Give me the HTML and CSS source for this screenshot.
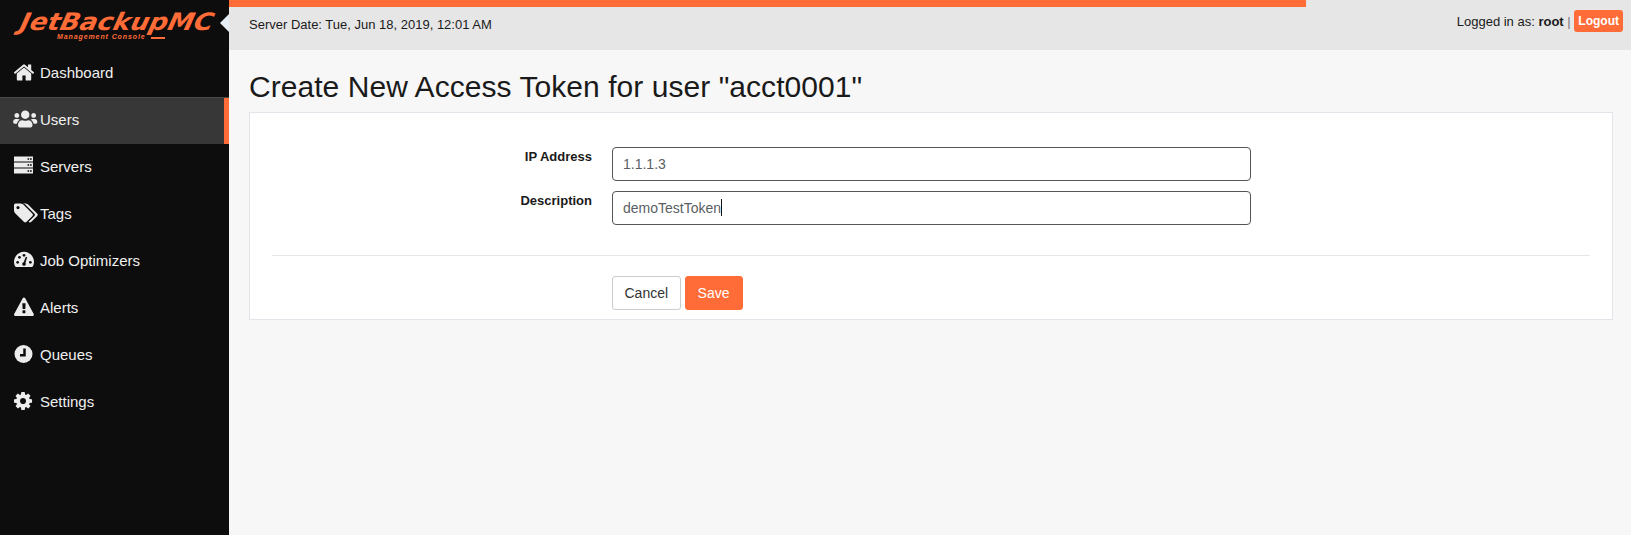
FILE: index.html
```html
<!DOCTYPE html>
<html lang="en">
<head>
    <meta charset="UTF-8">
    <title>JetBackupMC - Create New Access Token</title>
    <link rel="stylesheet" href="styles.css">
</head>
<body>
    <aside class="sidebar">
        <div class="logo">
            <div class="logo-name">JetBackupMC</div>
            <div class="logo-sub">Management Console</div>
            <span class="sidebar-toggle"></span>
        </div>
        <nav class="menu">
            <a href="#dashboard" class="menu-item">
                <svg class="menu-icon" viewBox="95 66 1920 1600" preserveAspectRatio="xMinYMid meet"><path d="M1472 992v480q0 26-19 45t-45 19h-384v-384h-256v384h-384q-26 0-45-19t-19-45v-480q0-1 .5-3t.5-3l575-474 575 474q1 2 1 6zm223-69l-62 74q-8 9-21 11h-3q-13 0-21-7l-692-577-692 577q-12 8-24 7-13-2-21-11l-62-74q-8-10-7-23.5t11-21.5l719-599q32-26 76-26t76 26l244 204v-195q0-14 9-23t23-9h192q14 0 23 9t9 23v408l219 182q10 8 11 21.5t-7 23.5z"/></svg>
                Dashboard
            </a>
            <a href="#users" class="menu-item active">
                <svg class="menu-icon" viewBox="20 -10 640 533" preserveAspectRatio="xMinYMid meet"><path d="M96 224c35.300 0 64-28.700 64-64s-28.700-64-64-64-64 28.700-64 64 28.700 64 64 64zm448 0c35.300 0 64-28.700 64-64s-28.700-64-64-64-64 28.700-64 64 28.700 64 64 64zm32 32h-64c-17.600 0-33.500 7.100-45.100 18.600 40.300 22.100 68.900 62 75.100 109.400h66c17.700 0 32-14.300 32-32v-32c0-35.300-28.700-64-64-64zm-256 0c61.900 0 112-50.100 112-112S381.900 32 320 32 208 82.100 208 144s50.100 112 112 112zm76.800 32h-8.300c-20.800 10-43.900 16-68.500 16s-47.600-6-68.500-16h-8.300C179.600 288 128 339.600 128 403.200V432c0 26.500 21.500 48 48 48h288c26.500 0 48-21.500 48-48v-28.800c0-63.600-51.600-115.200-115.200-115.200zm-223.700-13.400C161.500 263.100 145.600 256 128 256H64c-35.300 0-64 28.700-64 64v32c0 17.700 14.300 32 32 32h65.900c6.300-47.400 34.900-87.300 75.200-109.400z"/></svg>
                Users
            </a>
            <a href="#servers" class="menu-item">
                <svg class="menu-icon" viewBox="1 1 24 20" preserveAspectRatio="xMinYMid meet"><path fill-rule="evenodd" d="M1 1.500h19v5H1zM14.500 3.300h1.700v1.500h-1.700zM17 3.300h1.700v1.500H17zM1 7.500h19v5H1zM14.500 9.300h1.700v1.500h-1.700zM17 9.300h1.700v1.500H17zM1 13.500h19v5H1zM14.500 15.300h1.700v1.500h-1.700zM17 15.300h1.700v1.500H17z"/></svg>
                Servers
            </a>
            <a href="#tags" class="menu-item">
                <svg class="menu-icon" viewBox="0 80 1920 1600" preserveAspectRatio="xMinYMid meet"><path d="M448 448q0-53-37.5-90.5t-90.5-37.5-90.5 37.5-37.5 90.5 37.5 90.5 90.5 37.5 90.5-37.5 37.5-90.5zm1067 576q0 53-37 90l-491 492q-39 37-91 37-53 0-90-37l-715-716q-38-37-64.5-101t-26.5-117v-416q0-52 38-90t90-38h416q53 0 117 26.5t102 64.5l715 714q37 39 37 91zm384 0q0 53-37 90l-491 492q-39 37-91 37-36 0-59-14t-53-45l470-470q37-37 37-90 0-52-37-91l-715-714q-38-38-102-64.5t-117-26.5h224q53 0 117 26.5t102 64.5l715 714q37 39 37 91z"/></svg>
                Tags
            </a>
            <a href="#optimizers" class="menu-item">
                <svg class="menu-icon" viewBox="0 0 26.400 22" preserveAspectRatio="xMinYMid meet">
                    <path d="M11 2C5 2 0 6.900 0 13c0 2 .5 3.700 1.400 5.200.2.300.5.500.9.500h17.400c.4 0 .7-.2.900-.5.900-1.500 1.400-3.200 1.400-5.200C22 6.900 17 2 11 2z"/>
                    <g class="gauge-marks">
                        <circle cx="4" cy="13.500" r="1.500"/>
                        <circle cx="6" cy="8" r="1.500"/>
                        <circle cx="11" cy="5.800" r="1.500"/>
                        <circle cx="18" cy="13.500" r="1.500"/>
                        <circle cx="11" cy="15.500" r="2"/>
                        <path d="M10 15l3-7.500 1.500.5-2.500 8z"/>
                    </g>
                </svg>
                Job Optimizers
            </a>
            <a href="#alerts" class="menu-item">
                <svg class="menu-icon" viewBox="0 -50 2160 1800" preserveAspectRatio="xMinYMid meet"><path d="M1024 1375v-190q0-14-9.500-23.500t-22.500-9.500h-192q-13 0-22.500 9.500t-9.500 23.500v190q0 14 9.500 23.500t22.500 9.500h192q13 0 22.500-9.500t9.500-23.500zm-2-374l18-459q0-12-10-19-13-11-24-11h-220q-11 0-24 11-10 7-10 21l17 457q0 10 10 16.500t24 6.500h185q14 0 23.500-6.500t10.500-16.500zm-14-934l768 1408q35 63-2 126-17 29-46.500 46t-63.500 17h-1536q-34 0-63.500-17t-46.500-46q-37-63-2-126l768-1408q17-31 47-49t65-18 65 18 47 49z"/></svg>
                Alerts
            </a>
            <a href="#queues" class="menu-item">
                <svg class="menu-icon" viewBox="0 0 20 20" preserveAspectRatio="xMinYMid meet">
                    <circle cx="9.500" cy="10" r="9"/>
                    <path class="clock-hands" d="M10.500 4.500v6.800H6"/>
                </svg>
                Queues
            </a>
            <a href="#settings" class="menu-item">
                <svg class="menu-icon" viewBox="128 46 2040 1700" preserveAspectRatio="xMinYMid meet"><path d="M1152 896q0-106-75-181t-181-75-181 75-75 181 75 181 181 75 181-75 75-181zm512-109v222q0 12-8 23t-20 13l-185 28q-19 54-39 91 35 50 107 138 10 12 10 25t-9 23q-27 37-99 108t-94 71q-12 0-26-9l-138-108q-44 23-91 38-16 136-29 186-7 28-36 28h-222q-14 0-24.500-8.500t-11.500-21.500l-28-184q-49-16-90-37l-141 107q-10 9-25 9-14 0-25-11-126-114-165-168-7-10-7-23 0-12 8-23 15-21 51-66.500t54-70.500q-27-50-41-99l-183-27q-13-2-21-12.500t-8-23.500v-222q0-12 8-23t19-13l186-28q14-46 39-92-40-57-107-138-10-12-10-24 0-10 9-23 26-36 98.500-107.500t94.500-71.500q13 0 26 10l138 107q44-23 91-38 16-136 29-186 7-28 36-28h222q14 0 24.500 8.500t11.500 21.500l28 184q49 16 90 37l142-107q9-9 24-9 13 0 25 10 129 119 165 170 7 8 7 22 0 12-8 23-15 21-51 66.500t-54 70.500q26 50 41 98l183 28q13 2 21 12.500t8 23.500z"/></svg>
                Settings
            </a>
        </nav>
    </aside>

    <div class="page">
        <header class="topbar">
            <div class="progress"><div class="progress-fill" style="width: 76.8%"></div></div>
            <div class="topbar-row">
                <span class="server-date">Server Date: Tue, Jun 18, 2019, 12:01 AM</span>
                <span class="user-info">
                    Logged in as: <span class="user-name">root</span> <span class="user-sep">|</span>
                    <a href="#logout" class="logout">Logout</a>
                </span>
            </div>
        </header>

        <main class="content">
            <h1 class="title">Create New Access Token for user "acct0001"</h1>
            <form class="panel">
                <div class="form-row">
                    <label class="form-label" for="ip">IP Address</label>
                    <input class="form-input" id="ip" type="text" value="1.1.1.3">
                </div>
                <div class="form-row">
                    <label class="form-label" for="description">Description</label>
                    <div class="input-wrap">
                        <input class="form-input" id="description" type="text" value="demoTestToken">
                        <span class="caret"></span>
                    </div>
                </div>
                <hr class="divider">
                <div class="form-actions">
                    <button type="button" class="btn">Cancel</button>
                    <button type="button" class="btn btn-save">Save</button>
                </div>
            </form>
        </main>
    </div>
</body>
</html>
```

FILE: styles.css
```css
* {
    box-sizing: border-box;
}

html, body {
    height: 100%;
}

body {
    margin: 0;
    display: flex;
    font-family: "Liberation Sans", Arial, sans-serif;
    font-size: 13px;
    color: #1a1a1a;
    background-color: #f7f7f7;
    overflow: hidden;
}

/* Sidebar */
.sidebar {
    width: 229px;
    flex-shrink: 0;
    background-color: #0d0d0d;
}

.logo {
    height: 50px;
    padding: 12px 0 0 14px;
    position: relative;
    color: #ff6c37;
    font-style: italic;
    font-weight: bold;
}

.logo-name {
    font-size: 24px;
    line-height: 21px;
    font-family: "DejaVu Sans", sans-serif;
    transform-origin: left bottom;
    transform: translateX(4px) scaleX(1.09) skewX(-12deg);
    white-space: nowrap;
}

.logo-sub {
    font-size: 7px;
    line-height: 7px;
    letter-spacing: 0.9px;
    padding-left: 43px;
    white-space: nowrap;
}

.logo-sub::after {
    content: "";
    display: inline-block;
    width: 14px;
    height: 2px;
    margin-left: 5px;
    background-color: #ff6c37;
}

.sidebar-toggle {
    position: absolute;
    right: 0;
    top: 14px;
    border-style: solid;
    border-width: 9px 9px 9px 0;
    border-color: transparent #e6eef5 transparent transparent;
}

.menu-item {
    height: 47px;
    display: flex;
    align-items: center;
    padding: 0 0 2px 14px;
    color: #f0f0f0;
    font-size: 15px;
    text-decoration: none;
}

.menu-item.active {
    background-color: #373737;
    box-shadow: inset 0 1px 0 #4a4a4a, inset -5px 0 0 #ff6c37;
}

.menu-icon {
    width: 24px;
    height: 20px;
    margin-right: 2px;
    margin-top: -1px;
    flex-shrink: 0;
    fill: #ececec;
    overflow: visible;
}

.gauge-marks {
    fill: #0d0d0d;
}

.clock-hands {
    fill: none;
    stroke: #0d0d0d;
    stroke-width: 2.500;
}

/* Top bar */
.page {
    flex-grow: 1;
    display: flex;
    flex-direction: column;
    min-width: 0;
}

.topbar {
    height: 50px;
    background-color: #e6e6e6;
}

.progress {
    height: 7px;
}

.progress-fill {
    height: 100%;
    background-color: #ff6c37;
}

.topbar-row {
    display: flex;
    justify-content: space-between;
    align-items: flex-start;
    padding: 3px 8px 0 20px;
}

.server-date {
    font-size: 13px;
    line-height: 30px;
}

.user-info {
    font-size: 13px;
    line-height: 24px;
}

.user-name {
    font-weight: bold;
}

.user-sep {
    color: #777;
}

.logout {
    display: inline-block;
    vertical-align: 1px;
    background-color: #ff6c37;
    color: #fff;
    font-size: 12px;
    font-weight: bold;
    line-height: 22px;
    padding: 0 4px;
    border-radius: 3px;
    text-decoration: none;
}

/* Content */
.content {
    padding: 0 18px 0 20px;
}

.title {
    margin: 0;
    height: 62px;
    padding-top: 20px;
    font-size: 30px;
    line-height: 34px;
    letter-spacing: 0.05px;
    font-weight: normal;
}

.panel {
    height: 208px;
    padding: 34px 22px 0;
    background-color: #fff;
    border: 1px solid #e2e5ea;
}

.form-row {
    display: flex;
    margin-bottom: 10px;
}

.form-label {
    width: 320px;
    padding-top: 2px;
    margin-right: 20px;
    text-align: right;
    font-size: 13px;
    line-height: 16px;
    font-weight: bold;
}

.input-wrap {
    position: relative;
    width: 639px;
}

.form-input {
    display: block;
    width: 639px;
    height: 34px;
    padding: 0 10px;
    font-family: inherit;
    font-size: 14px;
    color: #5a5f66;
    background-color: #fff;
    border: 1px solid #555;
    border-radius: 4px;
    outline: none;
}

.caret {
    position: absolute;
    left: 109px;
    top: 8px;
    width: 1px;
    height: 17px;
    background-color: #111;
}

.divider {
    margin: 30px 0 20px;
    border: 0;
    border-top: 1px solid #e6e6e6;
}

.form-actions {
    display: flex;
    gap: 4px;
    padding-left: 340px;
}

.btn {
    height: 34px;
    padding: 0 11.500px;
    font-family: inherit;
    font-size: 14px;
    color: #333;
    background-color: #fff;
    border: 1px solid #ccc;
    border-radius: 3px;
}

.btn-save {
    padding: 0 12px;
    color: #fff;
    background-color: #ff6c37;
    border-color: #ff6c37;
}
```
